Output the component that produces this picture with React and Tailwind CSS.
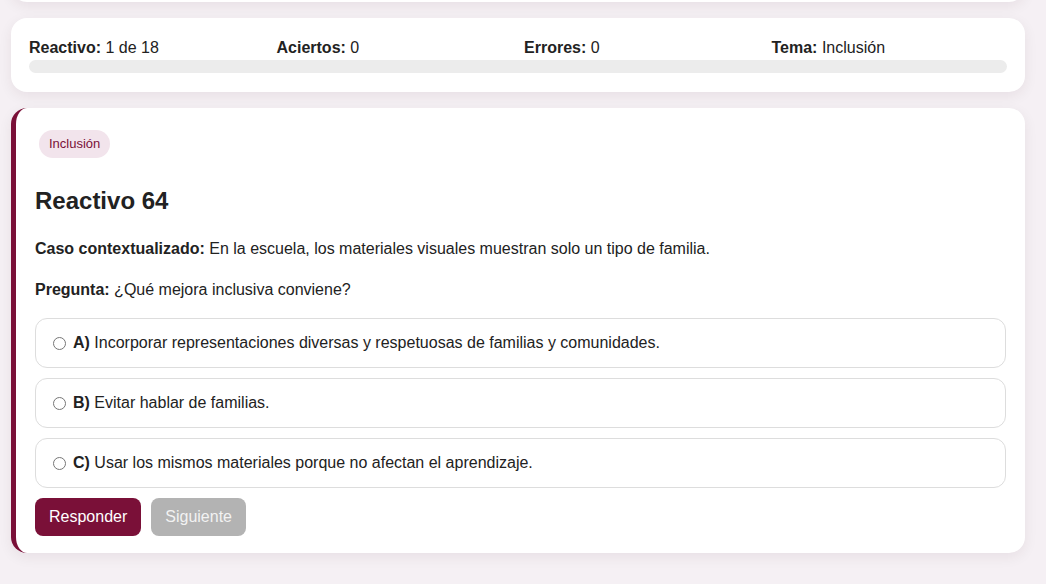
import React from "react";

const options = [
  { k: "A)", t: "Incorporar representaciones diversas y respetuosas de familias y comunidades." },
  { k: "B)", t: "Evitar hablar de familias." },
  { k: "C)", t: "Usar los mismos materiales porque no afectan el aprendizaje." },
];

export default function App() {
  return (
    <div
      className="min-h-[584px] bg-[#f5f0f4] pl-[11px] pr-[21px] pb-8 text-[#222]"
      style={{ fontFamily: '"Liberation Sans", Arial, sans-serif' }}
    >
      <div className="flex flex-col gap-4">
        <div className="-mt-[38px] h-[40px] rounded-2xl bg-white shadow-[0_4px_14px_rgba(60,0,30,0.07)]" />

        <div className="rounded-2xl bg-white px-[18px] pt-[18px] pb-[19px] shadow-[0_4px_14px_rgba(60,0,30,0.07)]">
          <div className="grid grid-cols-4 gap-3 text-base leading-6">
            <div><b>Reactivo:</b> 1 de 18</div>
            <div><b>Aciertos:</b> 0</div>
            <div><b>Errores:</b> 0</div>
            <div><b>Tema:</b> Inclusión</div>
          </div>
          <div className="h-[13px] rounded-full bg-[#ececec]" />
        </div>

        <div className="rounded-2xl border-l-[5px] border-[#7a1038] bg-white pl-[19px] pr-[19px] pt-[22px] pb-[17px] shadow-[0_4px_14px_rgba(60,0,30,0.07)]">
          <div className="ml-1 inline-flex h-7 items-center rounded-full bg-[#f2e4ec] px-2.5 text-[13px] text-[#7a1038]">
            Inclusión
          </div>
          <h2 className="mt-7 text-[24px] font-bold leading-[29px]">Reactivo 64</h2>
          <p className="mt-[22px] text-base leading-6">
            <b>Caso contextualizado:</b> En la escuela, los materiales visuales muestran solo un tipo de familia.
          </p>
          <p className="mt-[17px] text-base leading-6">
            <b>Pregunta:</b> ¿Qué mejora inclusiva conviene?
          </p>
          <div className="mt-4 flex flex-col gap-2.5">
            {options.map((o) => (
              <label
                key={o.k}
                className="flex h-[50px] items-center rounded-xl border border-[#dddddd] pl-[17px] pr-3 text-base leading-6"
              >
                <input type="radio" name="q" className="h-[13px] w-[13px] shrink-0" />
                <span className="ml-[7px]">
                  <b>{o.k}</b> {o.t}
                </span>
              </label>
            ))}
          </div>
          <div className="mt-2.5 flex gap-2.5">
            <button className="h-[38px] rounded-lg bg-[#7a1038] px-[14px] text-base text-white">Responder</button>
            <button className="h-[38px] rounded-lg bg-[#b3b3b3] px-[14px] text-base text-[#f2f2f2]">Siguiente</button>
          </div>
        </div>
      </div>
    </div>
  );
}
